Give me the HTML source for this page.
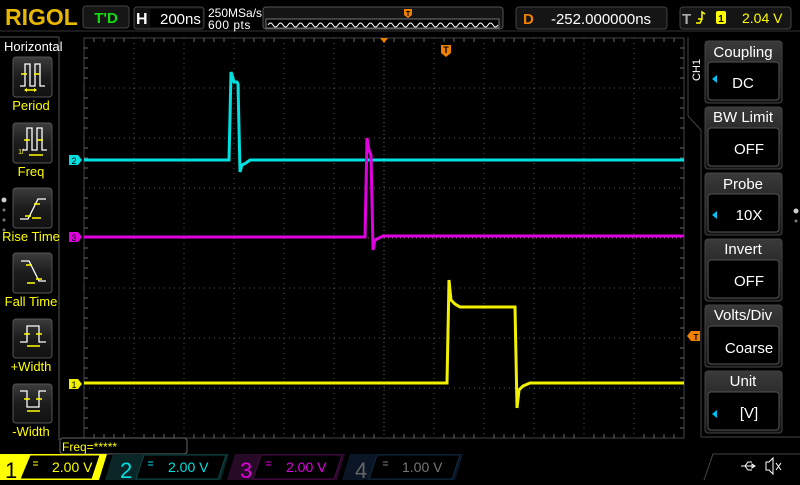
<!DOCTYPE html><html><head><style>
body{margin:0;background:#000;width:800px;height:480px;overflow:hidden;font-family:"Liberation Sans",sans-serif}
text{font-family:"Liberation Sans",sans-serif}
</style></head><body>
<svg width="800" height="480" viewBox="0 0 800 480" xmlns="http://www.w3.org/2000/svg">
<defs>
<linearGradient id="bg" x1="0" y1="0" x2="0" y2="1"><stop offset="0" stop-color="#3a3a3a"/><stop offset="1" stop-color="#111"/></linearGradient>
<linearGradient id="btn" x1="0" y1="0" x2="0" y2="1"><stop offset="0" stop-color="#3c3c3c"/><stop offset="0.5" stop-color="#1c1c1c"/><stop offset="1" stop-color="#111"/></linearGradient>
</defs>
<rect width="800" height="480" fill="#000"/>
<line x1="0" y1="31" x2="800" y2="31" stroke="#333"/>
<text x="5" y="25" font-family="Liberation Serif" font-weight="bold" font-size="23" fill="#e8b800">RIGOL</text>
<rect x="83" y="6" width="46" height="22" rx="3" fill="#161616" stroke="#444"/>
<text x="106" y="23" text-anchor="middle" font-size="15" font-weight="bold" fill="#11dd11">T'D</text>
<rect x="134" y="7" width="70" height="22" rx="3" fill="#111" stroke="#444"/>
<text x="136" y="24" font-size="16" font-weight="bold" fill="#fff">H</text>
<rect x="150" y="9" width="52" height="18" fill="#000"/>
<text x="160" y="24" font-size="15" fill="#fff">200ns</text>
<text x="208" y="17" font-size="12" fill="#fff">250MSa/s</text>
<text x="208" y="29" font-size="12" fill="#fff" letter-spacing="0.5">600  pts</text>
<rect x="263" y="7" width="240" height="22" rx="3" fill="#151515" stroke="#555"/>
<rect x="266" y="19" width="233" height="9" fill="#000" stroke="#777"/>
<path d="M268 25 q2.5-4 5 0 t5 0 t5 0 t5 0 t5 0 t5 0 t5 0 t5 0 t5 0 t5 0 t5 0 t5 0 t5 0 t5 0 t5 0 t5 0 t5 0 t5 0 t5 0 t5 0 t5 0 t5 0 t5 0 t5 0 t5 0 t5 0 t5 0 t5 0 t5 0 t5 0 t5 0 t5 0 t5 0 t5 0 t5 0 t5 0 t5 0 t5 0 t5 0 t5 0 t5 0 t5 0 t5 0 t5 0 t5 0 t5 0" fill="none" stroke="#fff" stroke-width="1"/>
<path d="M404 9 h8 v6 l-4 3 l-4 -3z" fill="#f08000"/><text x="408" y="16" text-anchor="middle" font-size="7" font-weight="bold" fill="#000">T</text>
<rect x="516" y="7" width="151" height="22" rx="3" fill="#151515" stroke="#444"/>
<text x="523" y="24" font-size="15" font-weight="bold" fill="#f08000">D</text>
<text x="601" y="24" text-anchor="middle" font-size="15" fill="#fff">-252.000000ns</text>
<rect x="680" y="7" width="111" height="22" rx="3" fill="#151515" stroke="#444"/>
<text x="682" y="24" font-size="15" font-weight="bold" fill="#aaa">T</text>
<path d="M698 19 h4 v-7 l3 2 M702 19 l-2 4 h-4" stroke="#ff0" stroke-width="1.5" fill="none"/>
<rect x="716" y="11" width="10" height="13" rx="2" fill="#ff0"/><text x="721" y="22" text-anchor="middle" font-size="10" font-weight="bold" fill="#000">1</text>
<text x="742" y="23" font-size="14" fill="#ff0">2.04 V</text>
<path d="M59 37 V440" stroke="#555"/>
<line x1="0" y1="37" x2="59" y2="37" stroke="#555"/>
<text x="4" y="51" font-size="13" fill="#fff">Horizontal</text>
<g font-size="13" fill="#ff0" text-anchor="middle">
<rect x="13" y="57" width="39" height="40" rx="3" fill="url(#btn)" stroke="#555"/>
<path d="M20 86 h5 v-22 h5 v22 h5 v-22 h5 v22 h5" stroke="#fff" fill="none" stroke-width="1.3"/>
<path d="M21 74 h6 M34 74 h6 M25 90 h11" stroke="#ff0" stroke-width="1.5"/><path d="M24 90 l3-2 v4z M37 90 l-3-2 v4z" fill="#ff0"/>
<text x="31" y="110">Period</text>
<rect x="13" y="123" width="39" height="40" rx="3" fill="url(#btn)" stroke="#555"/>
<path d="M22 150 h5 v-22 h5 v22 h5 v-22 h5 v22 h5" stroke="#fff" fill="none" stroke-width="1.3"/>
<path d="M24 140 h6 M37 140 h6 M29 155 h14" stroke="#ff0" stroke-width="1.5"/>
<text x="21" y="154" font-size="7">1/</text>
<text x="31" y="176">Freq</text>
<rect x="13" y="188" width="39" height="40" rx="3" fill="url(#btn)" stroke="#555"/>
<path d="M20 219 h8 l10 -20 h8" stroke="#fff" fill="none" stroke-width="1.3"/>
<path d="M34 204 h6 M25 216 h6 M32 218 h9" stroke="#ff0" stroke-width="1.5"/>
<text x="31" y="241">Rise Time</text>
<rect x="13" y="253" width="39" height="40" rx="3" fill="url(#btn)" stroke="#555"/>
<path d="M21 261 h8 l10 20 h7" stroke="#fff" fill="none" stroke-width="1.3"/>
<path d="M26 265 h6 M36 279 h6 M27 283 h8" stroke="#ff0" stroke-width="1.5"/>
<text x="31" y="306">Fall Time</text>
<rect x="13" y="319" width="39" height="39" rx="3" fill="url(#btn)" stroke="#555"/>
<path d="M20 342 h7 v-16 h12 v16 h7" stroke="#fff" fill="none" stroke-width="1.3"/>
<path d="M24 334 h6 M36 334 h6 M27 346 h13" stroke="#ff0" stroke-width="1.5"/>
<text x="31" y="371">+Width</text>
<rect x="13" y="384" width="39" height="39" rx="3" fill="url(#btn)" stroke="#555"/>
<path d="M20 391 h7 v16 h12 v-16 h7" stroke="#fff" fill="none" stroke-width="1.3"/>
<path d="M24 399 h6 M36 399 h6 M27 411 h13" stroke="#ff0" stroke-width="1.5"/>
<text x="31" y="436">-Width</text>
</g>
<circle cx="4" cy="200" r="2.5" fill="#ccc"/><circle cx="4" cy="210" r="1.5" fill="#777"/><circle cx="4" cy="220" r="1.5" fill="#777"/><circle cx="4" cy="230" r="1.5" fill="#777"/>
<rect x="84" y="38" width="600" height="400" fill="none" stroke="#444"/>
<g stroke="#555" stroke-dasharray="1,4">
<path d="M134 38V438M184 38V438M234 38V438M284 38V438M334 38V438M434 38V438M484 38V438M534 38V438M584 38V438M634 38V438"/>
<path d="M84 88H684M84 138H684M84 188H684M84 288H684M84 338H684M84 388H684"/>
</g>
<path d="M384 38V438M84 238H684" stroke="#666" stroke-dasharray="1,3"/>
<g stroke="#666">
<path d="M94 38v4M104 38v4M114 38v4M124 38v4M144 38v4M154 38v4M164 38v4M174 38v4M194 38v4M204 38v4M214 38v4M224 38v4M244 38v4M254 38v4M264 38v4M274 38v4M294 38v4M304 38v4M314 38v4M324 38v4M344 38v4M354 38v4M364 38v4M374 38v4M394 38v4M404 38v4M414 38v4M424 38v4M444 38v4M454 38v4M464 38v4M474 38v4M494 38v4M504 38v4M514 38v4M524 38v4M544 38v4M554 38v4M564 38v4M574 38v4M594 38v4M604 38v4M614 38v4M624 38v4M644 38v4M654 38v4M664 38v4M674 38v4"/>
<path d="M94 438v-4M104 438v-4M114 438v-4M124 438v-4M144 438v-4M154 438v-4M164 438v-4M174 438v-4M194 438v-4M204 438v-4M214 438v-4M224 438v-4M244 438v-4M254 438v-4M264 438v-4M274 438v-4M294 438v-4M304 438v-4M314 438v-4M324 438v-4M344 438v-4M354 438v-4M364 438v-4M374 438v-4M394 438v-4M404 438v-4M414 438v-4M424 438v-4M444 438v-4M454 438v-4M464 438v-4M474 438v-4M494 438v-4M504 438v-4M514 438v-4M524 438v-4M544 438v-4M554 438v-4M564 438v-4M574 438v-4M594 438v-4M604 438v-4M614 438v-4M624 438v-4M644 438v-4M654 438v-4M664 438v-4M674 438v-4"/>
<path d="M84 48h4M84 58h4M84 68h4M84 78h4M84 98h4M84 108h4M84 118h4M84 128h4M84 148h4M84 158h4M84 168h4M84 178h4M84 198h4M84 208h4M84 218h4M84 228h4M84 248h4M84 258h4M84 268h4M84 278h4M84 298h4M84 308h4M84 318h4M84 328h4M84 348h4M84 358h4M84 368h4M84 378h4M84 398h4M84 408h4M84 418h4M84 428h4"/>
<path d="M684 48h-4M684 58h-4M684 68h-4M684 78h-4M684 98h-4M684 108h-4M684 118h-4M684 128h-4M684 148h-4M684 158h-4M684 168h-4M684 178h-4M684 198h-4M684 208h-4M684 218h-4M684 228h-4M684 248h-4M684 258h-4M684 268h-4M684 278h-4M684 298h-4M684 308h-4M684 318h-4M684 328h-4M684 348h-4M684 358h-4M684 368h-4M684 378h-4M684 398h-4M684 408h-4M684 418h-4M684 428h-4"/>
</g>
<path d="M380 38h8l-4 5z" fill="#f08000"/>
<path d="M441 45 h10 v8 l-5 4 l-5-4z" fill="#f08000"/><text x="446" y="53" text-anchor="middle" font-size="9" font-weight="bold" fill="#000">T</text>
<path d="M84 160 H229 L231 72 L233 78 L234 82 L237 82 L238 84 L240 172 L242 165 L246 163 L250 160 H684" fill="none" stroke="#00e0e0" stroke-width="3"/>
<path d="M84 237 H365 L367 138 L369 150 L371 155 L373 250 L375 240 L379 238 L383 236 H684" fill="none" stroke="#e000e0" stroke-width="3"/>
<path d="M84 383 H447 L449 280 L451 300 L455 304 L460 307 H515 L517 408 L519 390 L523 386 L530 383 H684" fill="none" stroke="#f0f000" stroke-width="3"/>
<path d="M69 155 h9 l4 5 l-4 5 h-9z" fill="#00e0e0"/><text x="74" y="164" text-anchor="middle" font-size="9" fill="#000">2</text>
<path d="M69 232 h9 l4 5 l-4 5 h-9z" fill="#e000e0"/><text x="74" y="241" text-anchor="middle" font-size="9" fill="#000">3</text>
<path d="M69 379 h9 l4 5 l-4 5 h-9z" fill="#f0f000"/><text x="74" y="388" text-anchor="middle" font-size="9" fill="#000">1</text>
<path d="M687 336 l4-5 h9 v10 h-9z" fill="#f08000"/><text x="696" y="340" text-anchor="middle" font-size="8" font-weight="bold" fill="#000">T</text>
<path d="M688 37 V116 L701 130 V437 H800" fill="none" stroke="#444"/>
<text transform="translate(700,70) rotate(-90)" x="0" y="0" text-anchor="middle" font-size="11" fill="#fff">CH1</text>
<g text-anchor="middle" fill="#fff" font-size="15" font-weight="300">
<g><rect x="705" y="41" width="77" height="62" rx="3" fill="url(#bg)" stroke="#444"/><rect x="708" y="62" width="71" height="38" rx="3" fill="#000" stroke="#555"/><text x="743" y="57">Coupling</text><text x="743" y="88">DC</text><path d="M717 83 l-5-4 l5-4z" fill="#00c0f0"/></g>
<g><rect x="705" y="107" width="77" height="62" rx="3" fill="url(#bg)" stroke="#444"/><rect x="708" y="128" width="71" height="38" rx="3" fill="#000" stroke="#555"/><text x="743" y="122">BW Limit</text><text x="749" y="154">OFF</text></g>
<g><rect x="705" y="173" width="77" height="62" rx="3" fill="url(#bg)" stroke="#444"/><rect x="708" y="194" width="71" height="38" rx="3" fill="#000" stroke="#555"/><text x="743" y="189">Probe</text><text x="749" y="220">10X</text><path d="M717 219 l-5-4 l5-4z" fill="#00c0f0"/></g>
<g><rect x="705" y="239" width="77" height="62" rx="3" fill="url(#bg)" stroke="#444"/><rect x="708" y="260" width="71" height="38" rx="3" fill="#000" stroke="#555"/><text x="743" y="254">Invert</text><text x="749" y="286">OFF</text></g>
<g><rect x="705" y="305" width="77" height="62" rx="3" fill="url(#bg)" stroke="#444"/><rect x="708" y="326" width="71" height="38" rx="3" fill="#000" stroke="#555"/><text x="743" y="320">Volts/Div</text><text x="749" y="353">Coarse</text></g>
<g><rect x="705" y="371" width="77" height="62" rx="3" fill="url(#bg)" stroke="#444"/><rect x="708" y="392" width="71" height="38" rx="3" fill="#000" stroke="#555"/><text x="743" y="386">Unit</text><text x="749" y="418">[V]</text><path d="M717 418 l-5-4 l5-4z" fill="#00c0f0"/></g>
</g>
<circle cx="796" cy="211" r="2.5" fill="#ccc"/><circle cx="796" cy="221" r="1.5" fill="#777"/>
<rect x="60" y="438" width="127" height="16" rx="3" fill="#000" stroke="#666"/>
<text x="62" y="451" font-size="12" fill="#ff0">Freq=*****</text>
<path d="M0 454 H107 L99 480 H0z" fill="#ff0"/>
<text x="5" y="478" font-size="22" fill="#000">1</text>
<path d="M30 455 H100 L92 479 H20z" fill="#000" stroke="#ff0"/>
<path d="M33 462h5M33 465h5" stroke="#ff0" stroke-width="1"/>
<text x="52" y="472" font-size="14" fill="#ff0">2.00 V</text>
<path d="M113 454 H229 L221 480 H105z" fill="#0a2626"/>
<text x="120" y="478" font-size="22" fill="#00e0e0">2</text>
<path d="M144 455 H226 L218 479 H136z" fill="#000" stroke="#0a4a4a"/>
<path d="M148 462h5M148 465h5" stroke="#00e0e0"/>
<text x="168" y="472" font-size="14" fill="#00e0e0">2.00 V</text>
<path d="M235 454 H345 L337 480 H227z" fill="#260a26"/>
<text x="240" y="478" font-size="22" fill="#e000e0">3</text>
<path d="M261 455 H342 L334 479 H253z" fill="#000" stroke="#4a0a4a"/>
<path d="M266 462h5M266 465h5" stroke="#e000e0"/>
<text x="286" y="472" font-size="14" fill="#e000e0">2.00 V</text>
<path d="M350 454 H463 L455 480 H342z" fill="#0a1626"/>
<text x="355" y="478" font-size="22" fill="#666">4</text>
<path d="M377 455 H460 L452 479 H369z" fill="#000" stroke="#102a40"/>
<path d="M383 462h5M383 465h5" stroke="#777"/>
<text x="402" y="472" font-size="14" fill="#777">1.00 V</text>
<path d="M704 480 L713 454 H800" fill="none" stroke="#444"/>
<path d="M741 466 h14 M745 466 l3-4 h4 M745 466 l3 4 h4 M755 466 l-3-2 v4z" stroke="#fff" fill="none"/>
<path d="M766 462 h3 l4-4 v16 l-4-4 h-3z M776 463 l5 7 M781 463 l-5 7" stroke="#fff" fill="none"/>
</svg>
</body></html>
